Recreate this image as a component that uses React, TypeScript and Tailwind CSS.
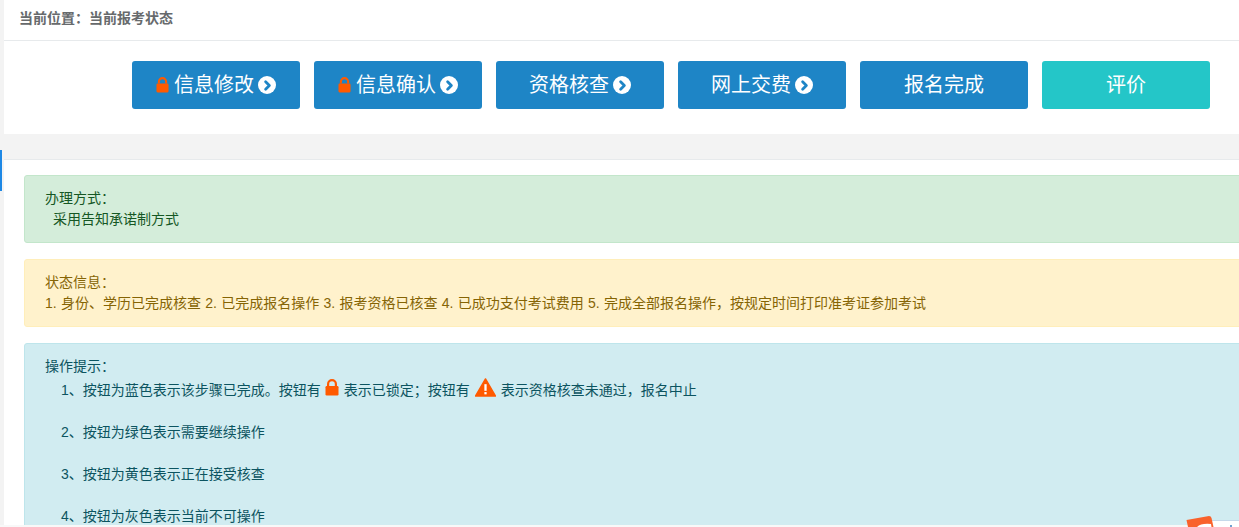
import React from 'react';
import { ChevronRight } from 'lucide-react';

function Lock({ className }: { className?: string }) {
  return (
    <svg viewBox="0 0 14 17" className={className} fill="#ff5a00">
      <path d="M2 7V5a5 5 0 0 1 10 0v2h-2.200V5a2.800 2.800 0 0 0-5.600 0v2z" />
      <rect x="0.500" y="7" width="13" height="9.500" rx="1.200" />
    </svg>
  );
}

function Warn() {
  return (
    <svg viewBox="0 0 22 20" className="ml-[5px] mr-[5px] inline-block h-[19px] w-[21px] align-[-2px]">
      <path d="M11 1 L21.500 19 H0.500 Z" fill="#ff5a00" stroke="#ff5a00" strokeWidth="1.500" strokeLinejoin="round" />
      <rect x="9.800" y="6.500" width="2.400" height="7" fill="#fff" />
      <rect x="9.800" y="14.800" width="2.400" height="2.400" fill="#fff" />
    </svg>
  );
}

function StepButton({ label, lock, arrow, teal }: { label: string; lock?: boolean; arrow?: boolean; teal?: boolean }) {
  return (
    <div
      className={
        'flex h-[48px] w-[168px] items-center justify-center rounded-[3px] text-[20px] text-white ' +
        (teal ? 'bg-[#24c6c8]' : 'bg-[#1e85c6]')
      }
    >
      {lock && <Lock className="mr-[5px] h-[16px] w-[13px]" />}
      <span>{label}</span>
      {arrow && (
        <span className="ml-[4px] flex h-[18px] w-[18px] items-center justify-center rounded-full bg-white">
          <ChevronRight size={15} strokeWidth={4.500} className="text-[#1e85c6]" />
        </span>
      )}
    </div>
  );
}

export default function App() {
  return (
    <div className="relative h-[527px] w-[1239px] overflow-hidden bg-[#f3f3f3] pl-[4px] font-['Liberation_Sans','Noto_Sans_CJK_SC',sans-serif] text-[14px]">
      <div className="absolute left-0 top-[150px] h-[41px] w-[2px] bg-[#1e88e5]" />
      <div className="h-[134px] bg-white">
        <div className="flex h-[41px] items-center border-b border-[#e7eaec] pb-[4px] pl-[15px] text-[14px] font-bold text-[#676a6c]">
          当前位置：当前报考状态
        </div>
        <div className="flex gap-[14px] pl-[128px] pt-[20px]">
          <StepButton label="信息修改" lock arrow />
          <StepButton label="信息确认" lock arrow />
          <StepButton label="资格核查" arrow />
          <StepButton label="网上交费" arrow />
          <StepButton label="报名完成" />
          <StepButton label="评价" teal />
        </div>
      </div>
      <div className="h-[25px]" />
      <div className="h-[366px] w-[1300px] overflow-hidden border-t border-[#e7eaec] bg-white pl-[20px] pt-[15px]">
        <div className="mb-[16px] h-[68px] rounded-[3px] border border-[#c3e6cb] bg-[#d4edda] px-[20px] pt-[12px] leading-[21px] text-[#155724]">
          <div>办理方式：</div>
          <div className="pl-[8px]">采用告知承诺制方式</div>
        </div>
        <div className="mb-[16px] h-[68px] rounded-[3px] border border-[#ffeeba] bg-[#fff2cc] px-[20px] pt-[12px] leading-[21px] text-[#856404]">
          <div>状态信息：</div>
          <div className="[word-spacing:0.400px]">1. 身份、学历已完成核查 2. 已完成报名操作 3. 报考资格已核查 4. 已成功支付考试费用 5. 完成全部报名操作，按规定时间打印准考证参加考试</div>
        </div>
        <div className="h-[220px] rounded-[3px] border border-[#bee5eb] bg-[#d1ecf1] px-[20px] pt-[12px] leading-[21px] text-[#0c5460]">
          <div>操作提示：</div>
          <div className="pl-[16px] pt-[1px]">
            <div>
              1、按钮为蓝色表示该步骤已完成。按钮有
              <Lock className="ml-[4px] mr-[5px] inline-block h-[17px] w-[14px] align-[-1px]" />
              表示已锁定；按钮有
              <Warn />
              表示资格核查未通过，报名中止
            </div>
            <div className="mt-[21px]">2、按钮为绿色表示需要继续操作</div>
            <div className="mt-[21px]">3、按钮为黄色表示正在接受核查</div>
            <div className="mt-[21px]">4、按钮为灰色表示当前不可操作</div>
          </div>
        </div>
      </div>
      <div className="absolute bottom-0 left-0 h-[2px] w-full bg-[#f8f8f8]" />
      <div className="absolute left-[1212px] top-[520px] h-[7px] w-[27px] border-t border-[#c5d9ea] bg-white">
        <div className="absolute left-[18px] top-[4px] h-[2px] w-[2px] bg-[#6f9fd0]" />
      </div>
      <svg viewBox="0 0 28 11" className="absolute left-[1186px] top-[516px] h-[11px] w-[28px]">
        <path d="M0.500 4 L23 0 Q25 0 25.500 2 L27.500 11 H2 Z" fill="#f9622c" />
        <path d="M11 11 Q15 7 25 8 L25.500 11 Z" fill="#fff" />
      </svg>
    </div>
  );
}
